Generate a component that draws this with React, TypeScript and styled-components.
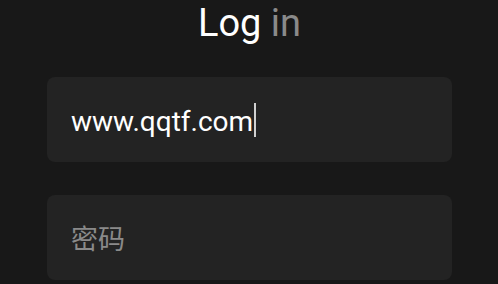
import React from "react";
import styled, { createGlobalStyle } from "styled-components";

const Global = createGlobalStyle`
  html, body { margin: 0; padding: 0; background: #181818; }
  body { font-family: Roboto, "Noto Sans CJK SC", sans-serif; }
`;

const Page = styled.div`
  width: 498px;
  height: 284px;
  overflow: hidden;
  box-sizing: border-box;
  padding: 0 46px 0 47px;
  display: flex;
  flex-direction: column;
  align-items: stretch;
`;

const Title = styled.h1`
  margin: 0;
  flex-shrink: 0;
  height: 44px;
  font-size: 38px;
  line-height: 46px;
  font-weight: 400;
  text-align: center;
  color: #ffffff;
  margin-bottom: 33px;
`;

const Dim = styled.span`
  color: #8a8a8a;
`;

const Field = styled.div`
  flex-shrink: 0;
  height: 85px;
  border-radius: 8px;
  background: #232323;
  box-sizing: border-box;
  padding: 0 24px;
  display: flex;
  align-items: center;
  margin-bottom: 33px;
`;

const Value = styled.span<{ $placeholder?: boolean }>`
  font-family: Roboto, "Noto Sans CJK SC", sans-serif;
  font-size: ${(p) => (p.$placeholder ? "27px" : "28px")};
  color: ${(p) => (p.$placeholder ? "#8a8a8a" : "#ffffff")};
  line-height: 34px;
  display: flex;
  align-items: center;
`;

const Text = styled.span`
  padding-top: 4px;
`;

const Caret = styled.span`
  display: inline-block;
  width: 2px;
  height: 34px;
  background: #d0d0d0;
  margin-left: 1px;
`;

export default function App() {
  return (
    <>
      <Global />
      <Page>
        <Title>
          Log <Dim>in</Dim>
        </Title>
        <Field>
          <Value>
            <Text>www.qqtf.com</Text>
            <Caret />
          </Value>
        </Field>
        <Field>
          <Value $placeholder>
            <Text>密码</Text>
          </Value>
        </Field>
      </Page>
    </>
  );
}
